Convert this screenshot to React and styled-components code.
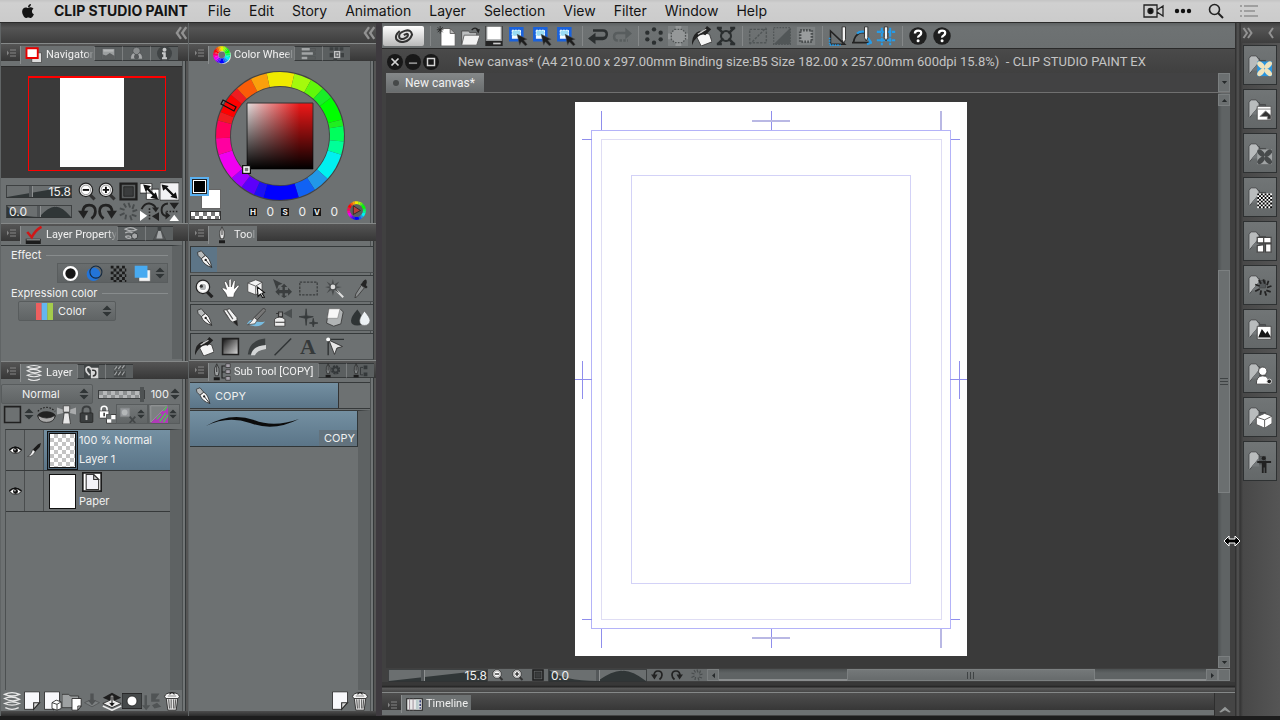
import React from 'react';
import styled, { createGlobalStyle, css } from 'styled-components';
import { FaApple } from 'react-icons/fa';

const GlobalStyle = createGlobalStyle`
    * {
        box-sizing: border-box;
    }

    body {
        margin: 0;
        background: #202020;
        color: #f0f0f0;
        font-family: Inter, "Liberation Sans", sans-serif;
        font-size: 11px;
        line-height: 16px;
        overflow: hidden;
    }

    button, input, select {
        font: inherit;
        color: inherit;
        border: 0;
        padding: 0;
        margin: 0;
        background: none;
        border-radius: 0;
    }

    svg {
        display: block;
        flex: none;
    }
`;

const checker = (size, a, b) => css`
    background: repeating-conic-gradient(${a} 0 25%, ${b} 0 50%) 0 0 / ${size}px ${size}px;
`;

/* ---------- icons ---------- */

const folder = (
    <>
        <path d="M6 5h6l1 2h6v8H6z" fill="#54585a" stroke="#46494a" strokeWidth="1" />
        <path d="M1 20V5l2-3h6l2 3h1v4L2 21z" fill="#b9bcbd" stroke="#45484a" strokeWidth="1" />
        <path d="M4 18l8-9v9z" fill="#74787a" />
    </>
);

const stack = (c) => (
    <g fill="none" stroke={c} strokeWidth="1.6">
        <path d="M3 4q9-4 18 0q-9 4-18 0zM3 9q9-4 18 1q-9 4-18-1zM3 15q9-4 18 0q-9 4-18 0z" />
        <path d="M4 20q8 4 16 0" />
    </g>
);

const nib = (
    <>
        <path d="M3 3l5-2l5 6l-5 4l-4-4z" fill="#b9bcbd" stroke="#303030" strokeWidth="1" />
        <path d="M8 11l5-4q6 3 8 15q-10-3-13-11z" fill="#f7f7f7" stroke="#202020" strokeWidth="1" />
        <path d="M21 22l-7-9" stroke="#202020" strokeWidth="1.2" />
        <circle cx="13.500" cy="12.500" r="1.500" fill="#202020" />
    </>
);

const uprightPen = (c) => (
    <>
        <path d="M12 1q-4 6-3 11l1 5h4l1-5q1-5-3-11z" fill={c} stroke="#222" strokeWidth="1" />
        <path d="M12 3v9" stroke="#222" strokeWidth="1.2" />
        <path d="M8 19h8v4H8z" fill="#1c1c1c" />
    </>
);

const trash = (
    <>
        <path d="M5 8h14l-2 15H7z" fill="#e4e4e4" stroke="#222" strokeWidth="1" />
        <path d="M8 10l1 11M11 10v11M14 10v11M16.500 10l-1 11" stroke="#555" strokeWidth="1.200" />
        <path d="M3 7q1-5 9-5t9 5l-2 2H5z" fill="#f5f5f5" stroke="#222" strokeWidth="1" />
        <path d="M9 4q3-4 6 0" fill="none" stroke="#222" strokeWidth="1.500" />
        <path d="M7 6h10" stroke="#777" />
    </>
);

const sheet = (
    <>
        <path d="M3 1h18v13l-7 8H3z" fill="#f8f8fb" stroke="#282828" strokeWidth="1" />
        <path d="M14 22v-8h7z" fill="#d8d8d8" stroke="#282828" strokeWidth="1.300" />
    </>
);

const magnifier = (sign) => (
    <>
        <path d="M14 15l7 7" stroke="#333" strokeWidth="4" />
        <circle cx="10" cy="10" r="8.500" fill="#f2f2f2" stroke="#252525" strokeWidth="1.500" />
        <circle cx="10" cy="10" r="6" fill="#fff" stroke="#888" strokeWidth="1" />
        <path d={sign === '+' ? 'M6 10h8M10 6v8' : 'M6 10h8'} stroke="#111" strokeWidth="2.400" />
    </>
);

const rotate = (flip) => (
    <g transform={flip ? 'translate(24 0) scale(-1 1)' : undefined}>
        <path d="M6 14q0-10 8-10t8 8q0 5-5 9" fill="none" stroke="#222" strokeWidth="3.400" />
        <path d="M0 11h13l-6 10z" fill="#222" />
    </g>
);

const burst = (c) => (
    <g stroke={c} strokeWidth="2.400" fill="none">
        <path d="M12 1l2 6M19 3l-2 6M23 10l-6 2M22 18l-6-2M16 23l-2-6M8 22l1-6M1 17l6-3M1 8l6 2M6 2l3 5" />
    </g>
);

const lock = (body) => (
    <>
        <path d="M7 11V7q0-5 5-5t5 5v4" fill="none" stroke={body} strokeWidth="2.500" />
        <rect x="4" y="10" width="16" height="12" rx="1" fill={body} stroke="#222" />
        <path d="M12 13v6" stroke={body === '#fff' ? '#222' : '#bbb'} strokeWidth="2.400" />
    </>
);

const selectArrow = (
    <>
        <path d="M3 3h14v14H3z" fill="#f4fbff" stroke="#1a62dc" strokeWidth="3.400" />
        <path d="M5 5h10v7H5z" fill="#9adcf4" stroke="#fff" strokeDasharray="2 1.500" />
        <path d="M11 10l12 6l-4 1l4 5l-2 2l-5-5l-2 4z" fill="#1d1d1d" stroke="#555" strokeWidth=".6" />
    </>
);

const question = (
    <>
        <circle cx="12" cy="12" r="10.500" fill="#1f1f1f" />
        <path d="M8.300 9q0-3.500 3.800-3.500t3.700 3q0 2-1.900 3t-1.800 2.500" fill="none" stroke="#fff" strokeWidth="2.800" />
        <circle cx="12.100" cy="17.600" r="1.800" fill="#fff" />
    </>
);

const flower = (bg, c) => (
    <>
        <rect x="10" y="8" width="16" height="16" fill={bg} />
        {[45, 135, 225, 315].map((a) => (
            <ellipse key={a} cx="18" cy="10.500" rx="2.800" ry="5" fill={c} transform={`rotate(${a} 18 16)`} />
        ))}
    </>
);

const ICONS = {
    menu: <path d="M4 7l4 5l-4 5zM10 5h12v2H10zM10 11h12v2H10zM10 17h12v2H10z" fill="#858585" />,
    navigator: <>
        <path d="M9 9h13v13H9z" fill="#ddd" stroke="#444" />
        <path d="M2 3h15v13H2z" fill="#fff" stroke="#e80000" strokeWidth="2.500" />
    </>,
    photo: <>
        <path d="M2 4h20v17H2z" fill="#9c9fa0" stroke="#4c4f50" />
        <path d="M2 21v-8l6 2l6-4l8 5v5z" fill="#5c5f60" />
        <path d="M4 6h16v3H4z" fill="#b6b8b9" />
    </>,
    dome: <>
        <circle cx="12" cy="8" r="6" fill="#8a8d8e" stroke="#424546" />
        <path d="M2 21q0-8 5-10l5 4l5-4q5 2 5 10z" fill="#a5a7a8" stroke="#424546" />
        <circle cx="12" cy="17" r="4" fill="#55585a" />
    </>,
    info: <>
        <circle cx="12" cy="12" r="12" fill="#404445" />
        <circle cx="12" cy="6" r="3.200" fill="#c5c7c8" />
        <path d="M8 10h6v8h2v3H8v-3h2v-5H8z" fill="#c5c7c8" />
    </>,
    bars: <>
        <path d="M1 4h22v4H1zM1 11h22v3H1zM1 17h22v4H1z" fill="#5b5f60" stroke="#505354" />
        <path d="M1 3h13v4H1zM1 10h18v4H1zM1 17h9v4H1z" fill="#a2a5a6" />
    </>,
    swatches: <>
        <path d="M1 2h6v5H1zM9 2h6v5H9zM17 2h6v5h-6zM1 11h6v7H1zM18 11h6v7h-6zM7 20h6v4H7z" fill="#3d4142" />
        <path d="M9 9h8v9H9z" fill="none" stroke="#c2c4c5" strokeWidth="2" />
        <path d="M12 12h3v3h-3z" fill="#ccc" />
    </>,
    zoomOut: magnifier('-'),
    zoomIn: magnifier('+'),
    fit: <>
        <path d="M2 2h20v20H2z" fill="#5b5e5f" stroke="#1e1e1e" strokeWidth="3" />
        <path d="M6 6h12v12H6z" fill="#3a3c3d" stroke="#222" />
    </>,
    cascade: <>
        <path d="M0 2h15v12H0zM8 9h16v13H8z" fill="#fff" stroke="#222" />
        <path d="M7 6l12 12" stroke="#111" strokeWidth="3" />
        <path d="M4 3l10 2l-7 7zM23 22l-10-2l7-7z" fill="#111" />
    </>,
    expand: <>
        <path d="M0 1h24v22H0z" fill="#f2f2f4" stroke="#222" />
        <path d="M6 6l12 12" stroke="#111" strokeWidth="3" />
        <path d="M2 3l9 2l-7 6zM22 21l-9-2l7-6z" fill="#111" />
    </>,
    rotateLeft: rotate(false),
    rotateRight: rotate(true),
    burst: burst('#484c4d'),
    flipH: <>
        <path d="M2 9q4-8 10-7t8 6" fill="none" stroke="#222" strokeWidth="2.500" />
        <path d="M15 7h9l-4 6z" fill="#222" />
        <path d="M0 11l9 6.500l-9 6.500z" fill="#fff" />
        <path d="M24 13l-9 5l9 6z" fill="#222" />
        <path d="M12 8v16" stroke="#222" strokeWidth="2" strokeDasharray="2 2" />
    </>,
    flipV: <>
        <path d="M10 2q-8 1-8 8t7 8" fill="none" stroke="#222" strokeWidth="2.500" />
        <path d="M7 12v10l6-5zM12 1h12l-6 8z" fill="#222" />
        <path d="M12 24h12l-6-8z" fill="#fff" />
        <path d="M8 12h16" stroke="#222" strokeWidth="2" strokeDasharray="2 2" />
    </>,
    propertyCheck: <>
        <path d="M1 17h20v7H1z" fill="#1c1c1c" />
        <path d="M2 18h18v1H2z" fill="#ddd" />
        <path d="M3 8l6 7q5-10 13-14" fill="none" stroke="#d01818" strokeWidth="3.400" />
    </>,
    layersSearch: <>
        <path d="M2 5q9-5 18 1q-9 4-18-1zM2 11q7-4 13 1M2 17q6-3 10 1q-5 4-10-1" fill="none" stroke="#b0b2b3" strokeWidth="2" />
        <circle cx="17" cy="16" r="5" fill="#a5a7a8" stroke="#3b3e3f" strokeWidth="1.500" />
    </>,
    lantern: <>
        <path d="M9 1h6v6H9z" fill="#3d4041" />
        <path d="M9 8h6l7 14H2z" fill="#55585a" stroke="#404344" />
        <path d="M10 8h4l3 12H7z" fill="#a7aaab" />
    </>,
    borderCircle: <circle cx="12" cy="12" r="9" fill="#161616" stroke="#fff" strokeWidth="3.400" />,
    blueCircle: <>
        <circle cx="10.500" cy="13" r="9.500" fill="#2374d8" />
        <circle cx="14" cy="10" r="8.500" fill="none" stroke="#15293f" strokeWidth="1.500" />
    </>,
    tone: <path d="M1 3h22M5 7h18M1 11h22M5 15h18M1 19h22M5 23h18" stroke="#1c1c1c" strokeWidth="4" strokeDasharray="4 4" />,
    blueLayer: <>
        <path d="M7 7h16v16H7z" fill="#f3f3f3" stroke="#444" strokeWidth=".6" />
        <path d="M1 1h18v17H1z" fill="#48aaf0" />
    </>,
    updown: <path d="M3 10l9-9l9 9zM3 14l9 9l9-9z" fill="#303536" />,
    colorBars: <>
        <path d="M0 0h8v24H0z" fill="#ed5f5f" />
        <path d="M8 0h8v24H8z" fill="#64b6f0" />
        <path d="M16 0h8v24h-8z" fill="#a4cc4c" />
    </>,
    stack: stack('#e8e8e8'),
    history: <>
        <path d="M0 0h24v24H0z" fill="#3f4344" />
        <path d="M11 6h12v17H11z" fill="#d8d8d8" />
        <path d="M11 9q-1-5-5-4t-2 7l5 6" fill="none" stroke="#d8d8d8" strokeWidth="3" />
        <path d="M13 10q6-1 6 4t-5 5" fill="none" stroke="#333" strokeWidth="2.400" />
    </>,
    clap: <>
        <path d="M3 5l19-3v5L3 10zM3 11h19v10H3z" fill="#46494a" />
        <path d="M4 9l4-5M10 8l4-5M16 7l4-5M4 18l4-6M10 18l4-6M16 18l4-6" stroke="#a0a3a4" strokeWidth="2" />
    </>,
    square: <path d="M2 2h20v20H2z" fill="none" stroke="#202020" strokeWidth="2" />,
    mask: <>
        <ellipse cx="12" cy="14" rx="11.500" ry="6" fill="#222" />
        <path d="M1 13q11 7 22 0q-1 9-11 9T1 13z" fill="#aaa" stroke="#222" />
        <path d="M1 8q11-10 22 0" fill="none" stroke="#222" strokeWidth="1.500" strokeDasharray="2 2" />
    </>,
    lighthouse: <>
        <path d="M0 3l8 3v4l-8 2zM24 3l-8 3v4l8 2z" fill="#a9abac" />
        <path d="M8 1h8v8H8z" fill="#ddd" stroke="#444" />
        <path d="M9 10h6l2 14H7z" fill="#e8e8e8" stroke="#333" />
    </>,
    lock: lock('#3b3e3f'),
    lockAlpha: <>
        <g transform="scale(.75)">{lock('#fff')}</g>
        <path d="M12 12h12v11H12z" fill="#fff" stroke="#222" />
        <path d="M12 12h6v6h-6zM18 18h6v5h-6z" fill="#6b6f70" />
    </>,
    maskDim: <>
        <path d="M2 3h13v12H2z" fill="#94979a" stroke="#858889" />
        <circle cx="8" cy="9" r="4" fill="#b4b7b8" />
        <path d="M15 15l8 9M23 15l-8 9" stroke="#434748" strokeWidth="2.500" />
    </>,
    rulerDim: <>
        <path d="M1 1h22L1 23z" fill="#7c8081" stroke="#a0a3a4" />
        <path d="M24 0v24H1z" fill="#b03ab8" />
        <path d="M9 19l6-7M13 22l8-11M18 23l6-10M18 8l5-6" stroke="#4fbf56" strokeWidth="2" />
    </>,
    eye: <>
        <path d="M1 12q10-13 22 0q-11 11-22 0z" fill="#fff" stroke="#111" strokeWidth="1.500" />
        <path d="M1 11q10-10 22 0" fill="none" stroke="#111" strokeWidth="3" />
        <circle cx="12" cy="12" r="4.500" fill="#111" />
        <circle cx="11" cy="10.500" r="1.300" fill="#fff" />
    </>,
    brushEdit: <>
        <path d="M24 0l-5 2l-9 9l4 4l8-8z" fill="#1a1a1a" />
        <path d="M10 11l4 4q-4 8-13 9q6-4 9-13z" fill="#f0f0f0" stroke="#222" />
    </>,
    paperIcon: <>
        <path d="M1 1h22v22H1z" fill="#fff" stroke="#1c1c1c" strokeWidth="2" />
        <path d="M5 3h9l6 6v12H5z" fill="#f3f3f8" stroke="#333" strokeWidth="1.300" />
        <path d="M14 3v6h6z" fill="#ccc" stroke="#333" strokeWidth="1.300" />
    </>,
    newSheet: sheet,
    newVector: <>
        {sheet}
        <path d="M12 14l5-3l6 2v8l-5 2l-6-2zM12 14l6 2v7M18 16l5-3" fill="#fff" stroke="#222" />
    </>,
    newFolder: <>
        <path d="M0 4h8l2 2h10v14H0z" fill="#9ea1a2" stroke="#333" />
        <path d="M12 9h11v9l-4 5h-7z" fill="#fff" stroke="#222" />
        <path d="M19 23v-5h4z" fill="#ccc" stroke="#222" />
    </>,
    mergeDim: <>
        <path d="M3 14l9-4l9 4l-9 5z" fill="#7c8081" stroke="#505354" />
        <path d="M10 3h4v8h3l-5 6l-5-6h3z" fill="#505354" />
    </>,
    merge: <>
        <path d="M1 8l11-6l11 6l-11 5z" fill="#1e1e1e" />
        <path d="M1 15l11-5l11 5l-11 5z" fill="#eee" stroke="#222" />
        <path d="M1 18l11 5l11-5" fill="none" stroke="#eee" strokeWidth="1.800" />
        <path d="M11 6h2v8h3l-4 5l-4-5h3z" fill="#111" stroke="#fff" strokeWidth=".7" />
    </>,
    maskOn: <>
        <path d="M0 3h24v18H0z" fill="#45494a" stroke="#1e1e1e" />
        <circle cx="12" cy="12" r="6" fill="#fff" stroke="#222" />
    </>,
    applyDim: <path d="M3 5h3v12h4l-5 6l-5-6h3zM11 3h10l-5 7h5v3H11zM12 17l6-3l5 5l-8 2z" fill="#505455" />,
    trash,
    penUp: uprightPen('#e6e6e6'),
    subTools: <>
        <g transform="translate(-7 0)">{uprightPen('#9fa2a3')}</g>
        <path d="M16 4h-4v16h4M12 12h4" fill="none" stroke="#222" strokeWidth="1.500" />
        <path d="M17 1h6v5h-6zM17 9h6v5h-6zM17 18h6v5h-6z" fill="#a7a2ab" stroke="#333" />
    </>,
    penGear: <>
        <g transform="translate(-7 0)">{uprightPen('#7d8182')}</g>
        <circle cx="17" cy="11" r="5.500" fill="none" stroke="#34383a" strokeWidth="4" strokeDasharray="3 1.300" />
        <circle cx="17" cy="11" r="4" fill="none" stroke="#34383a" strokeWidth="2.500" />
    </>,
    penList: <>
        <g transform="translate(-7 0)">{uprightPen('#7d8182')}</g>
        <path d="M16 7h-4v12h4" fill="none" stroke="#34383a" strokeWidth="1.500" />
        <path d="M17 4h6v6h-6zM17 15h6v6h-6z" fill="#34383a" />
    </>,
    nib,
    magnify: <>
        <path d="M15 16l7 7" stroke="#222" strokeWidth="4" />
        <circle cx="10" cy="10" r="8.500" fill="#ededed" stroke="#222" strokeWidth="1.500" />
        <circle cx="10" cy="10" r="5" fill="#b4b7b8" stroke="#fff" strokeWidth="2" />
        <circle cx="8" cy="9" r="2" fill="#333" />
    </>,
    hand: <path d="M8 23q-1-5-7-11q2-2 6 1L4 4q2-2 3 0l3 6V1q2-2 3 0v9l3-8q2-1 2 1l-1 9l4-4q3-1 2 1l-6 9l-1 5z" fill="#fff" stroke="#333" strokeWidth=".8" />,
    cube: <>
        <path d="M1 5l10-4l8 3v11l-8 5l-10-4zM1 5l10 4v11M11 9l8-5" fill="#f2f2f2" stroke="#444" />
        <path d="M13 10l9 7l-3 1l3 5l-2 1l-3-5l-3 3z" fill="#fff" stroke="#111" strokeWidth="1.400" />
    </>,
    move: <>
        <path d="M0 0l12 6l-5 2l-2 6z" fill="#3b3e3f" />
        <path d="M14 6l4 4h-3v4h4v-3l5 5l-5 5v-3h-4v3h3l-4 3l-4-3h2v-3H8v3l-5-5l5-5v3h4v-4H10z" fill="#3b3e3f" />
    </>,
    marquee: <path d="M1 4h22v16H1z" fill="none" stroke="#3b3e3f" strokeWidth="1.600" strokeDasharray="3 1.500" />,
    wand: <>
        <path d="M11 11l12 12" stroke="#e0e0e0" strokeWidth="2.500" />
        <path d="M10 0l1.500 7L18 3l-4 6l7 1l-7 2l4 6l-6-4l-2 7l-2-7l-6 4l4-6l-6-2l6-1l-4-6l6 4z" fill="#4a4d4e" />
        <circle cx="10" cy="10" r="3" fill="#ddd" />
    </>,
    dropper: <>
        <path d="M13 8l4 3l-9 11l-3 2l1-5z" fill="#8c8f90" stroke="#333" />
        <path d="M15 3q5-5 5 1l-1 4l2 2l-2 2l-7-5l2-2z" fill="#242424" />
    </>,
    pencil: <>
        <path d="M3 3l8-2l9 11l1 10l-9-6z" fill="#f2f2f2" stroke="#333" />
        <path d="M3 3l6 9M7 2l8 12" stroke="#555" strokeWidth="1.500" />
        <path d="M21 23l-6-6l5-2z" fill="#222" />
    </>,
    brush: <>
        <path d="M0 20q4-7 8-4q7 3 15 1q-6 7-13 6t-10-3z" fill="#78bce0" />
        <path d="M21 0l3 3L13 15l-4-3z" fill="#777" stroke="#333" />
        <path d="M9 12l4 3l-3 5l-9 1q5-3 8-9z" fill="#f2f2f2" stroke="#444" />
    </>,
    airbrush: <>
        <path d="M13 7l11-6v12z" fill="#4b4f50" />
        <path d="M2 14q6-5 13 0v9H2z" fill="#eee" stroke="#333" />
        <path d="M7 5h5v6H7zM4 7h4M3 18h12" fill="#999" stroke="#333" strokeWidth="1.400" />
    </>,
    sparkle: <path d="M9 1l1 9l8 1l-8 2l-1 9l-1-9l-8-2l8-1zM18 13l1 5l5 1l-5 1l-1 4l-1-4l-4-1l4-1z" fill="#363a3b" stroke="#363a3b" />,
    eraser: <>
        <path d="M5 1h14l4 4l-3 15l-9 3l-9-4z" fill="#b1b4b5" stroke="#333" />
        <path d="M5 1h14l-3 12H3z" fill="#f7f7f7" stroke="#777" strokeWidth=".7" />
    </>,
    drops: <>
        <path d="M8 2q-8 9-8 14q0 6 8 6t7-6q0-5-7-14z" fill="#2f3435" />
        <path d="M17 4q-6 8-6 12q0 6 6 6t7-6q0-4-7-12z" fill="#edf2f5" stroke="#666" strokeWidth=".7" />
    </>,
    bucket: <>
        <path d="M10 6l11 4l3 9l-13 5l-5-10z" fill="#f5f5f5" stroke="#333" />
        <path d="M11 9l7-9l5 4l-7 7M0 19q1-10 9-13l5 4q-9 1-14 13z" fill="#222" />
        <path d="M7 10l10-6" stroke="#ccc" strokeWidth="1.500" />
    </>,
    gradient: <path d="M2 2h20v20H2z" fill="url(#gradTool)" stroke="#202020" strokeWidth="2" />,
    curve: <>
        <path d="M1 22Q3 4 23 2v9Q12 13 9 22z" fill="#3c4041" />
        <path d="M5 23q2-12 19-13v5Q12 17 10 23z" fill="#d4d6d7" />
    </>,
    line: <path d="M2 23L23 2" stroke="#303435" strokeWidth="1.800" />,
    rulerPen: <>
        <path d="M3 3h21M4 3v20" stroke="#303435" strokeWidth="1.800" />
        <path d="M5 4l17 8l-7 2l-3 8z" fill="#e8e8e8" stroke="#222" />
        <circle cx="4" cy="3" r="2.500" fill="#fff" />
    </>,
    newDoc: <>
        <path d="M6 3h11l6 6v15H6z" fill="#fff" stroke="#555" />
        <path d="M17 3v6h6z" fill="#bbb" stroke="#555" />
        <path d="M5 0v9M1 4.500h8M2 1.500l6 6M8 1.500l-6 6" stroke="#222" strokeWidth="1" />
    </>,
    open: <>
        <path d="M2 6h8l2 2h8v13H2z" fill="#bdbfc0" stroke="#444" />
        <path d="M5 11h19l-4 12H2z" fill="#f2f2f2" stroke="#555" />
        <path d="M14 5q4-5 8 0" fill="none" stroke="#222" strokeWidth="1.500" />
        <path d="M19 4h5l-2 5z" fill="#222" />
    </>,
    save: <>
        <path d="M2 0h20v24H2z" fill="#9c9fa0" stroke="#333" />
        <path d="M4 1h16v15H4z" fill="#fff" />
        <path d="M2 18h20v6H2z" fill="#242424" />
        <path d="M11 20h9v2h-9z" fill="#ccc" />
    </>,
    selectArrow,
    undo: <path d="M0 15l9-7v5h9q3 0 3-3t-3-3H6V4h12q6 0 6 6t-6 7H9v5z" fill="#2b2f30" />,
    redo: <>
        <path d="M24 9l-8-7v5H7q-6 0-6 6t6 6v-3q-3 0-3-3t3-3h9v6z" fill="#585d5e" />
        <path d="M9 17.500h10" stroke="#585d5e" strokeWidth="3" strokeDasharray="3 1.500" />
    </>,
    spinner: <g fill="#2b2f30">
        <circle cx="12" cy="4" r="2.600" /><circle cx="20" cy="8" r="2.600" /><circle cx="20" cy="16" r="2.600" />
        <circle cx="12" cy="20" r="2.600" /><circle cx="4" cy="16" r="2.600" /><circle cx="4" cy="8" r="2.600" />
    </g>,
    glow: <>
        <path d="M0 0h24v24H0z" fill="#7b7f80" />
        <path d="M9 0h7v24H9zM0 9h24v7H0z" fill="#949798" />
        <path d="M8 4h9l4 4v8l-4 4H8l-4-4V8z" fill="#959899" stroke="#505455" strokeWidth="1.600" strokeDasharray="2 1.500" />
    </>,
    transform: <>
        <circle cx="12" cy="12" r="6" fill="none" stroke="#2b2f30" strokeWidth="2.500" />
        <path d="M2 2l7 7M22 2l-7 7M2 22l7-7M22 22l-7-7" stroke="#2b2f30" strokeWidth="3" />
        <path d="M1 1h6v3H1zM17 1h6v3h-6zM1 20h6v3H1zM17 20h6v3h-6z" fill="#2b2f30" />
    </>,
    noSelect: <path d="M2 4h20v16H2zM2 22L22 2" fill="none" stroke="#515657" strokeWidth="1.700" strokeDasharray="3 1.500" />,
    invert: <>
        <path d="M2 2h20v20H2z" fill="none" stroke="#515657" strokeWidth="1.500" strokeDasharray="2 1.500" />
        <path d="M22 2v20H2z" fill="#515657" />
    </>,
    border: <>
        <path d="M1 1h22v22H1z" fill="#7d8182" />
        <path d="M5 5h14v14H5z" fill="#9a9d9e" stroke="#4a4e4f" strokeWidth="3" strokeDasharray="2 1.500" />
    </>,
    snapRuler: <>
        <path d="M3 6v16h17z" fill="none" stroke="#222" strokeWidth="1.800" />
        <path d="M2 14v9h13" fill="none" stroke="#269be8" strokeWidth="2" strokeDasharray="2 1" />
        <path d="M17 1h4v15l-2 5l-2-5z" fill="#f3f3f3" stroke="#222" />
    </>,
    snapSpecial: <>
        <path d="M2 19q1-8 8-11h5M0 20h20" fill="none" stroke="#222" strokeWidth="2" />
        <path d="M6 9q3-3 9-2M19 14l4 6l-5 2" fill="none" stroke="#269be8" strokeWidth="2.500" />
        <path d="M15 1h4v13l-2 4l-2-4z" fill="#f3f3f3" stroke="#222" />
    </>,
    snapGrid: <>
        <path d="M7 2v21M17 2v21M1 7h22M1 17h22" stroke="#269be8" strokeWidth="2.500" strokeDasharray="5 1" />
        <path d="M10 1h4v13l-2 4l-2-4z" fill="#f3f3f3" stroke="#222" />
    </>,
    question,
    filmStrip: <>
        <path d="M1 4h22v16H1z" fill="#e9e9e9" stroke="#222" strokeWidth="1.500" />
        <path d="M5 4v16M10 4v16" stroke="#a3969e" strokeWidth="1.500" />
        <path d="M14 5h4v14h-4z" fill="#bcc" />
        <path d="M19 6h2v3h-2zM19 11h2v3h-2zM19 16h2v2h-2z" fill="#26316c" />
    </>,
    folderBlue: <>{folder}{flower('#2a95de', '#efe3bd')}</>,
    folderScene: <>{folder}<path d="M10 9h15v15H10z" fill="#fff" stroke="#555" /><path d="M10 12h15M13 20l6-6l6 5v4h-4v-3h-4z" fill="#333" stroke="#888" /></>,
    folderGray: <>{folder}{flower('#a0a3a4', '#474a4b')}</>,
    folderTone: <>{folder}<path d="M10 8h16v16H10z" fill="#fff" /><path d="M10 9h16M12 11h14M10 13h16M12 15h14M10 17h16M12 19h14M10 21h16M12 23h14" stroke="#000" strokeWidth="2" strokeDasharray="2 2" /></>,
    folderComic: <>{folder}<path d="M10 8h7v6h-7zM17 8h8v6h-8zM10 17l7-1v8h-7zM19 15h6v9h-6z" fill="#fff" stroke="#444" strokeWidth="1.300" /></>,
    folderBurst: <>{folder}<g transform="translate(7 5) scale(.8)">{burst('#222')}</g></>,
    folderImage: <>{folder}<path d="M10 9h15v14H10z" fill="#fff" stroke="#444" /><path d="M11 21l4-9l4 5l2-3l4 7z" fill="#161616" /></>,
    folderPose: <>{folder}<circle cx="16" cy="10" r="4.500" fill="#fff" stroke="#444" /><path d="M9 24q0-9 7-9t7 9z" fill="#fff" stroke="#444" /><circle cx="23" cy="21" r="2.500" fill="#222" stroke="#ddd" /></>,
    folderCube: <>{folder}<path d="M9 12l9-4l8 3v8l-8 5l-9-4zM9 12l9 3v9M18 15l8-4" fill="#fff" stroke="#555" /></>,
    folderBody: <>{folder}<circle cx="17" cy="9" r="2.200" fill="#222" /><path d="M10 12h15v2h-5v11h-2v-6h-1v6h-2V14h-5z" fill="#222" /></>,
    close: <path d="M6 6l12 12M18 6L6 18" stroke="#d5d5d5" strokeWidth="3" />,
    minimize: <path d="M5 14h14" stroke="#8d8d8d" strokeWidth="3" />,
    maximize: <path d="M6 6h12v12H6z" fill="none" stroke="#d5d5d5" strokeWidth="2.500" />,
    chevronsLeft: <path d="M12 2L5 12l7 10M21 2l-7 10l7 10" fill="none" stroke="#929292" strokeWidth="4" />,
    chevronsRight: <path d="M3 2l7 10l-7 10M12 2l7 10l-7 10" fill="none" stroke="#929292" strokeWidth="4" />,
    chevronLeft: <path d="M16 2L9 12l7 10" fill="none" stroke="#929292" strokeWidth="4" />,
    up: <path d="M5 16l7-8l7 8z" fill="#262a2b" />,
    down: <path d="M5 8l7 8l7-8z" fill="#262a2b" />,
    left: <path d="M16 5l-8 7l8 7z" fill="#262a2b" />,
    right: <path d="M8 5l8 7l-8 7z" fill="#262a2b" />,
    drawerUp: <path d="M2 17L12 8l10 9l-3 1l-7-4l-7 4z" fill="#949797" />,
};

function Icon({ name, size = 16 }) {
    return (
        <svg width={size} height={size} viewBox="0 0 24 24" aria-hidden="true">
            {ICONS[name]}
        </svg>
    );
}

/* ---------- page frame ---------- */

const Page = styled.div`
    height: 100vh;
    min-height: 640px;
    display: flex;
    flex-direction: column;
`;

const MenuBar = styled.nav`
    height: 23px;
    flex: none;
    display: flex;
    align-items: center;
    gap: 18px;
    padding: 0 22px 0 20px;
    background: linear-gradient(#c4c4c4, #d0d0d0 3px, #cbcbcb);
    border-bottom: 1px solid #2b2b2b;
    color: #141414;
    font-size: 14px;
    line-height: 20px;
`;

const MenuItem = styled.button`
    white-space: nowrap;
`;

const AppName = styled(MenuItem)`
    font-weight: 700;
    padding-right: 2px;
`;

const MenuExtras = styled.div`
    margin-left: auto;
    display: flex;
    align-items: center;
    gap: ${(p) => p.$gap}px;
`;

const Workspace = styled.div`
    flex: 1;
    min-height: 0;
    display: flex;
    background: #3e3a3f;
`;

const Footer = styled.div`
    height: 4px;
    flex: none;
    background: #1d1d1d;
`;

const Dock = styled.aside`
    width: 188px;
    flex: none;
    display: flex;
    flex-direction: column;
    border-left: 1px solid #606465;
    background: #6d7172;
`;

const DockHeader = styled.div`
    height: 20px;
    flex: none;
    display: flex;
    align-items: center;
    justify-content: flex-end;
    background: linear-gradient(#414141, #545454 5px, #3e3e3e);
`;

const DockBase = styled.div`
    height: 5px;
    flex: none;
    background: linear-gradient(#4d4d4d, #2c2c2c);
`;

const Panel = styled.section`
    display: flex;
    flex-direction: column;
    min-height: 0;
    ${(p) => (p.$height ? `height: ${p.$height}px; flex: none;` : 'flex: 1;')}
`;

const TabBar = styled.div`
    height: 18px;
    flex: none;
    display: flex;
    border-top: 1px solid #858888;
    background: linear-gradient(#555, #373737);
`;

const PanelMenu = styled.button`
    width: 19px;
    padding-left: 4px;
    flex: none;
`;

const Tab = styled.button`
    width: ${(p) => p.$width}px;
    height: 18px;
    margin-top: 2px;
    padding-left: 4px;
    flex: none;
    display: flex;
    align-items: center;
    gap: 3px;
    background: #6d7172;
    border-left: 1px solid #8b8e8f;
    overflow: hidden;
    white-space: nowrap;
    font-family: Roboto, sans-serif;
    font-size: 11px;
    z-index: 1;
`;

const TabText = styled.span`
    flex: 1;
    overflow: hidden;
    text-align: left;
    mask-image: linear-gradient(to left, ${(p) => (p.$fade ? 'transparent, #000 9px' : '#000, #000')});
`;

const MiniTab = styled.button`
    width: 28px;
    margin-top: 2px;
    flex: none;
    display: flex;
    justify-content: center;
    align-items: center;
    background: #5b5f60;
    border: 1px solid #36393a;
    border-left-color: #7c7f80;
    border-right-width: 0;
`;

const PanelBody = styled.div`
    flex: 1;
    min-height: 0;
    display: flex;
    flex-direction: column;
    padding: ${(p) => p.$top || 5}px 6px 0 0;
    background:
        linear-gradient(to right, #4c5051 1px, #717576 1px, #717576 3px, #343839 3px, #343839 4px, #555 4px) right / 6px 100% no-repeat,
        #6d7172;
`;

const IconButton = styled.button`
    width: ${(p) => p.$w || 20}px;
    height: 20px;
    flex: none;
    display: flex;
    align-items: center;
    justify-content: center;
    ${(p) => p.$boxed && 'background: linear-gradient(#747879, #616566); border: 1px solid #585c5d;'}
`;

const Row = styled.div`
    display: flex;
    align-items: center;
    gap: ${(p) => p.$gap || 0}px;
    height: ${(p) => p.$height || 20}px;
    flex: none;
    padding-left: ${(p) => p.$left || 0}px;
`;

/* ---------- value slider ---------- */

const SliderBox = styled.label`
    display: grid;
    width: ${(p) => p.$width}px;
    height: 13px;
    margin-right: ${(p) => p.$after || 0}px;
    flex: none;
    border: 1px solid #3e4142;
    border-bottom-color: #303334;
    overflow: hidden;
    background: #6b6f70;

    & > * {
        grid-area: 1 / 1;
        width: 100%;
        height: 11px;
    }
`;

const Range = styled.input`
    appearance: none;
    background: none;

    &::-webkit-slider-thumb {
        appearance: none;
        width: 4px;
        height: 15px;
        background: #54585a;
        border-right: 1px solid #8d9091;
    }
`;

const Reading = styled.output`
    padding-left: ${(p) => (p.$align === 'left' ? 2 : 0)}px;
    font-size: 12px;
    line-height: 11px;
    text-align: ${(p) => p.$align};
    pointer-events: none;
`;

function ValueSlider({ width, shape, value, label, percent, align, after }) {
    return (
        <SliderBox $width={width} $after={after}>
            <svg viewBox="0 0 66 12" preserveAspectRatio="none">
                <path d={shape === 'ramp' ? 'M0 12L66 0v12z' : 'M0 0Q10 12 33 12Q44 0 50 1Q56 0 66 12H0z'} fill="#303637" />
            </svg>
            <Range type="range" aria-label={label} defaultValue={percent} />
            <Reading $align={align}>{value}</Reading>
        </SliderBox>
    );
}

/* ---------- navigator ---------- */

const NavView = styled.div`
    flex: 1;
    display: flex;
    justify-content: center;
    padding: 9px 16px 7px 27px;
    background: #3a3a3a;
    border-top: 1px solid #2b2b2b;
`;

const NavFrame = styled.div`
    flex: 1;
    display: flex;
    justify-content: center;
    padding: 0 11px 3px 0;
    border: 1px solid #f00;
    border-top-width: 2px;
`;

const NavPage = styled.div`
    width: 64px;
    background: #fff;
`;

const NavControls = styled.div`
    padding: 3px 0 2px 5px;
`;

function DockPanel({ height, tab, icon, width, fade, minis, children, top }) {
    return (
        <Panel $height={height}>
            <TabBar>
                <PanelMenu aria-label={`${tab} menu`}><Icon name="menu" size={12} /></PanelMenu>
                <Tab $width={width}>
                    <Icon name={icon} size={18} />
                    <TabText $fade={fade}>{tab}</TabText>
                </Tab>
                {minis.map((m) => <MiniTab key={m} aria-label={m}><Icon name={m} size={15} /></MiniTab>)}
            </TabBar>
            <PanelBody $top={top}>{children}</PanelBody>
        </Panel>
    );
}

function Navigator() {
    return (
        <DockPanel height={180} tab="Navigator" icon="navigator" width={74} fade minis={['photo', 'dome', 'info']}>
            <NavView><NavFrame><NavPage /></NavFrame></NavView>
            <NavControls>
                <Row>
                    <ValueSlider width={66} after={5} shape="ramp" value="15.8" label="Zoom" percent={36} align="right" />
                    {['zoomOut', 'zoomIn', 'fit', 'cascade', 'expand'].map((n) => (
                        <IconButton key={n} aria-label={n} $w={n === 'fit' ? 22 : 20}><Icon name={n} size={19} /></IconButton>
                    ))}
                </Row>
                <Row>
                    <ValueSlider width={66} after={5} shape="bump" value="0.0" label="Rotation" percent={50} align="left" />
                    {['rotateLeft', 'rotateRight', 'burst', 'flipH', 'flipV'].map((n) => (
                        <IconButton key={n} aria-label={n} $w={n === 'burst' ? 22 : 20}><Icon name={n} size={19} /></IconButton>
                    ))}
                </Row>
            </NavControls>
        </DockPanel>
    );
}

/* ---------- layer property ---------- */

const PropertyBox = styled.div`
    flex: 1;
    margin-bottom: 2px;
    border-top: 1px solid #363a3b;
    border-right: 10px solid #5f6364;
    padding: 1px 4px 0 5px;
`;

const Legend = styled.div`
    height: 16px;
    display: flex;
    align-items: center;
    gap: 5px;
    padding-left: 5px;
    white-space: nowrap;

    &::after {
        content: '';
        flex: 1;
        height: 1px;
        background: #888c8d;
    }
`;

const EffectGroup = styled.div`
    width: 111px;
    height: 20px;
    margin: 0 0 2px auto;
    display: flex;
    align-items: center;
    background: linear-gradient(#696d6e, #5d6162);
    border: 1px solid #595d5e;
`;

const SelectBox = styled.label`
    width: ${(p) => p.$width}px;
    height: 20px;
    display: flex;
    align-items: center;
    flex: none;
    gap: 5px;
    padding: 0 2px 0 ${(p) => p.$left}px;
    margin-left: ${(p) => p.$offset || 0}px;
    background: linear-gradient(#727677, #606465);
    border: 1px solid #585c5d;
    border-radius: 2px;
`;

const Select = styled.select`
    appearance: none;
    flex: 1;
    min-width: 0;
    outline: none;
`;

function LayerProperty() {
    return (
        <DockPanel height={138} tab="Layer Property" icon="propertyCheck" width={97} top={4} fade minis={['layersSearch', 'lantern']}>
            <PropertyBox>
                <Legend>Effect</Legend>
                <EffectGroup>
                    {['borderCircle', 'blueCircle', 'tone', 'blueLayer'].map((n) => (
                        <IconButton key={n} $w={24} aria-label={n}><Icon name={n} size={17} /></IconButton>
                    ))}
                    <Icon name="updown" size={12} />
                </EffectGroup>
                <Legend>Expression color</Legend>
                <SelectBox $width={98} $left={17} $offset={12}>
                    <Icon name="colorBars" size={17} />
                    <Select aria-label="Expression color"><option>Color</option><option>Gray</option></Select>
                    <Icon name="updown" size={12} />
                </SelectBox>
            </PropertyBox>
        </DockPanel>
    );
}

/* ---------- layers ---------- */

const OpacityRange = styled.input`
    appearance: none;
    width: 47px;
    height: 9px;
    margin-left: 5px;
    border: 1px solid #3c3f40;
    ${checker(8, '#b7b9ba', '#8d9091')}

    &::-webkit-slider-thumb {
        appearance: none;
        width: 4px;
        height: 15px;
        background: #4e5253;
    }
`;

const NumberField = styled.input`
    width: ${(p) => p.$width}px;
    text-align: right;
`;

const LayerList = styled.div`
    flex: 1;
    min-height: 0;
    margin-left: 4px;
    border-left: 1px solid #4c5051;
    border-top: 1px solid #36393a;
    border-right: 12px solid #5e6263;
`;

const LayerRow = styled.div`
    height: 41px;
    display: grid;
    grid-template-columns: 19px 19px 1fr;
    border-bottom: 1px solid #36393a;
`;

const LayerCell = styled.div`
    display: flex;
    align-items: center;
    justify-content: center;
    border-right: 1px solid #4a4d4e;
`;

const LayerMain = styled.div`
    display: flex;
    align-items: center;
    gap: 3px;
    padding-left: 5px;
    font-size: 11px;
    line-height: 19px;
    ${(p) => p.$active && 'background: linear-gradient(#7490a2, #5b7588);'}
`;

const Thumb = styled.div`
    width: 27px;
    height: 35px;
    border: 1px solid #111;
    background: #fff;
    ${(p) => p.$clear && checker(8, '#c4c4c4', '#fff')}
    ${(p) => p.$clear && 'outline: 1px solid #4e6577; box-shadow: 0 0 0 2px #111;'}
`;

const LayerNames = styled.div`
    display: flex;
    flex-direction: column;
    white-space: nowrap;
`;

const PanelFooter = styled.div`
    height: 21px;
    flex: none;
    display: flex;
    align-items: center;
    padding-left: 1px;
    justify-content: ${(p) => (p.$end ? 'flex-end' : 'flex-start')};
`;

function Layers() {
    return (
        <DockPanel tab="Layer" icon="stack" width={57} minis={['history', 'clap']}>
            <Row>
                <SelectBox $width={92} $left={20}>
                    <Select aria-label="Blending mode"><option>Normal</option><option>Multiply</option></Select>
                    <Icon name="updown" size={12} />
                </SelectBox>
                <OpacityRange type="range" aria-label="Layer opacity" defaultValue={100} />
                <NumberField $width={24} aria-label="Opacity value" defaultValue="100" />
                <Icon name="updown" size={12} />
            </Row>
            <Row $left={2}>
                <Icon name="square" size={19} />
                <IconButton $w={14} aria-label="Palette color"><Icon name="updown" size={12} /></IconButton>
                {['mask', 'lighthouse', 'lock', 'lockAlpha'].map((n) => (
                    <IconButton key={n} aria-label={n}><Icon name={n} size={19} /></IconButton>
                ))}
                <IconButton $w={32} $boxed aria-label="Enable mask"><Icon name="maskDim" size={17} /><Icon name="updown" size={10} /></IconButton>
                <IconButton $w={32} $boxed aria-label="Show ruler"><Icon name="rulerDim" size={18} /><Icon name="updown" size={10} /></IconButton>
            </Row>
            <Row $height={5} />
            <LayerList>
                <LayerRow>
                    <LayerCell><Icon name="eye" size={13} /></LayerCell>
                    <LayerCell><Icon name="brushEdit" size={14} /></LayerCell>
                    <LayerMain $active>
                        <Thumb $clear />
                        <LayerNames><span>100 % Normal</span><span>Layer 1</span></LayerNames>
                    </LayerMain>
                </LayerRow>
                <LayerRow>
                    <LayerCell><Icon name="eye" size={13} /></LayerCell>
                    <LayerCell />
                    <LayerMain>
                        <Thumb />
                        <LayerNames>
                            <Row $left={3}><Icon name="paperIcon" size={20} /></Row>
                            <span>Paper</span>
                        </LayerNames>
                    </LayerMain>
                </LayerRow>
            </LayerList>
            <PanelFooter>
                {['stack', 'newSheet', 'newVector', 'newFolder', 'mergeDim', 'merge', 'maskOn', 'applyDim', 'trash'].map((n) => (
                    <IconButton key={n} aria-label={n}><Icon name={n} size={20} /></IconButton>
                ))}
            </PanelFooter>
        </DockPanel>
    );
}

/* ---------- colour wheel ---------- */

// clockwise from the top, each entry is [end angle, colour]
const HUES = [
    [13, '#f0ea00'], [29, '#a4fa0c'], [42, '#60f80a'], [53, '#18ee28'], [75, '#00ff00'], [81, '#20ee20'],
    [95, '#00ff5c'], [107, '#00ff98'], [132, '#00f0f0'], [147, '#2298e8'], [163, '#1062f4'], [195, '#0000ff'],
    [204, '#1c10f4'], [217, '#5c00fa'], [229, '#a000ff'], [253, '#f000f0'], [268, '#ff00a0'], [284, '#ff005c'],
    [292, '#ee1c20'], [310, '#ff0000'], [318, '#ee1c20'], [333, '#fa5c08'], [348, '#faa00c'],
];

const point = (angle, r) => {
    const a = (angle * Math.PI) / 180;
    return `${65 + Math.sin(a) * r} ${65 - Math.cos(a) * r}`;
};

const arc = (from, to, inner) => `M${point(from, 64)}A64 64 0 0 1 ${point(to, 64)}L${point(to, inner)}A${inner} ${inner} 0 0 0 ${point(from, inner)}z`;

function HueRing({ inner = 50 }) {
    return HUES.map(([end, color], i) => (
        <path key={end} d={arc(i ? HUES[i - 1][0] : -12, end, inner)} fill={color} />
    ));
}

ICONS.wheel = (
    <>
        <circle cx="13" cy="13" r="11" fill="#e8e8e8" />
        <g transform="scale(.18)"><HueRing inner={26} /></g>
        <circle cx="11.700" cy="11.700" r="4.500" fill="#6d7172" />
    </>
);

ICONS.colorSpace = (
    <>
        <g transform="scale(.185)"><HueRing inner={42} /></g>
        <circle cx="12" cy="12" r="8" fill="#5b5f60" />
        <path d="M8 6l9 6l-9 5z" fill="#b83c3c" stroke="#222" />
    </>
);

const WheelArea = styled.div`
    flex: 1;
    display: grid;
    padding-top: 5px;

    & > * {
        grid-area: 1 / 1;
    }
`;

const Wheel = styled.svg`
    width: 130px;
    height: 130px;
    place-self: start center;
`;

const WheelFooter = styled.div`
    align-self: end;
    display: flex;
    align-items: flex-end;
    height: 48px;
    padding: 0 4px 3px 0;
`;

const SwatchStack = styled.div`
    width: 33px;
    padding-left: 1px;
    display: flex;
    flex-direction: column;
`;

const MainSwatch = styled.button`
    width: 19px;
    height: 19px;
    z-index: 1;
    background: #000;
    border: 2px solid #5ab0f0;
    box-shadow: inset 0 0 0 1px #222, inset 0 0 0 2px #fff;
`;

const SubSwatch = styled.button`
    width: 20px;
    height: 20px;
    margin: -7px 0 2px 11px;
    background: #fff;
    border: 1px solid #666;
`;

const ClearSwatch = styled.button`
    width: 31px;
    height: 9px;
    border: 1px solid #333;
    ${checker(8, '#777', '#fff')}
`;

const Hsv = styled.div`
    flex: 1;
    display: flex;
    justify-content: flex-end;
    gap: 7px;
    padding-right: 8px;
    font-size: 12px;
`;

const HsvField = styled.label`
    display: flex;
    align-items: center;
`;

const HsvLetter = styled.span`
    width: 8px;
    background: #161616;
    font-size: 8px;
    font-weight: 700;
    line-height: 8px;
    text-align: center;
`;

function ColorWheel() {
    return (
        <DockPanel height={180} tab="Color Wheel" icon="wheel" width={86} fade minis={['bars', 'swatches']}>
            <WheelArea>
                <Wheel viewBox="0 0 130 130">
                    <defs>
                        <linearGradient id="sat"><stop stopColor="#e4e0e0" /><stop offset=".8" stopColor="#f01818" /></linearGradient>
                        <linearGradient id="val" x2="0" y2="1"><stop stopColor="#000" stopOpacity="0" /><stop offset="1" stopColor="#000" /></linearGradient>
                        <linearGradient id="gradTool" x2="1" y2="1"><stop stopColor="#111" /><stop offset="1" stopColor="#ddd" /></linearGradient>
                    </defs>
                    <circle cx="65" cy="65" r="57" fill="none" stroke="#444" strokeWidth="16" />
                    <HueRing />
                    <path d="M32 32h66v66H32z" fill="url(#sat)" stroke="#333" />
                    <path d="M32 32h66v66H32z" fill="url(#val)" />
                    <path d="M8 29l13 7l-2 4l-13-7z" fill="none" stroke="#111" strokeWidth="1.200" />
                    <path d="M29 96h5v5h-5z" fill="#777" stroke="#111" strokeWidth="4" />
                    <path d="M29 96h5v5h-5z" fill="#777" stroke="#fff" strokeWidth="1.500" />
                </Wheel>
                <WheelFooter>
                    <SwatchStack>
                        <MainSwatch aria-label="Main color" />
                        <SubSwatch aria-label="Sub color" />
                        <ClearSwatch aria-label="Transparent" />
                    </SwatchStack>
                    <Hsv>
                        {['H', 'S', 'V'].map((l) => (
                            <HsvField key={l}>
                                <HsvLetter>{l}</HsvLetter>
                                <NumberField $width={17} defaultValue="0" />
                            </HsvField>
                        ))}
                    </Hsv>
                    <IconButton aria-label="Switch color space"><Icon name="colorSpace" size={19} /></IconButton>
                </WheelFooter>
            </WheelArea>
        </DockPanel>
    );
}

/* ---------- tools ---------- */

const TOOLS = [
    ['magnify', 'hand', 'cube', 'move', 'marquee', 'wand', 'dropper'],
    ['nib', 'pencil', 'brush', 'airbrush', 'sparkle', 'eraser', 'drops'],
    ['bucket', 'gradient', 'curve', 'line', 'text', 'rulerPen'],
];

const ToolRow = styled.div`
    height: 27px;
    flex: none;
    display: grid;
    grid-template-columns: repeat(7, 1fr);
    margin: 0 -4px 2px 1px;
    border: 1px solid #363a3b;
    border-bottom-color: #4a4e4f;
    background: #6d7172;
`;

const ToolButton = styled.button`
    display: flex;
    align-items: center;
    justify-content: center;
    ${(p) => p.$active && 'background: #5d7587;'}
`;

const TextGlyph = styled.span`
    color: #35393a;
    font: 700 22px/22px "Liberation Serif", serif;
`;

function Tools() {
    return (
        <DockPanel height={137} tab="Tool" icon="penUp" width={49} fade minis={[]}>
            <ToolRow><ToolButton $active aria-label="Pen"><Icon name="nib" size={19} /></ToolButton></ToolRow>
            {TOOLS.map((row) => (
                <ToolRow key={row[0]}>
                    {row.map((n) => (
                        <ToolButton key={n} aria-label={n}>
                            {n === 'text' ? <TextGlyph>A</TextGlyph> : <Icon name={n} size={19} />}
                        </ToolButton>
                    ))}
                </ToolRow>
            ))}
        </DockPanel>
    );
}

const GroupBar = styled.div`
    height: 27px;
    flex: none;
    display: flex;
    border: 1px solid #36393a;
    border-width: 1px 0;
    margin-left: 1px;
`;

const GroupTab = styled.button`
    width: 149px;
    display: flex;
    align-items: center;
    gap: 3px;
    padding-left: 4px;
    background: linear-gradient(#7490a2, #5b7588);
    border-right: 1px solid #333;
`;

const BrushList = styled.div`
    flex: 1;
    min-height: 0;
    margin: 1px 0 0 1px;
    border-top: 1px solid #36393a;
    border-right: 12px solid #5e6263;
`;

const BrushItem = styled.button`
    width: 100%;
    height: 36px;
    display: flex;
    justify-content: space-between;
    align-items: flex-start;
    background: linear-gradient(#7490a2, #5b7588);
    border: 1px solid #303638;
    border-width: 0 1px 1px 0;
`;

const BrushName = styled.span`
    align-self: flex-end;
    padding: 0 2px 0 5px;
    background: #62727d;
`;

function SubTools() {
    return (
        <DockPanel tab="Sub Tool [COPY]" icon="subTools" width={110} top={4} minis={['penGear', 'penList']}>
            <GroupBar><GroupTab><Icon name="nib" size={18} />COPY</GroupTab></GroupBar>
            <BrushList>
                <BrushItem>
                    <svg width="126" height="26" viewBox="0 0 126 26">
                        <path d="M16 15Q40 1 64 9Q84 17 109 8Q84 21 60 12Q38 4 16 15z" fill="#0b0b0b" />
                    </svg>
                    <BrushName>COPY</BrushName>
                </BrushItem>
            </BrushList>
            <PanelFooter $end>
                <IconButton aria-label="Duplicate sub tool"><Icon name="newSheet" size={20} /></IconButton>
                <IconButton aria-label="Delete sub tool"><Icon name="trash" size={20} /></IconButton>
            </PanelFooter>
        </DockPanel>
    );
}

/* ---------- document window ---------- */

const Main = styled.main`
    flex: 1;
    min-width: 0;
    margin-left: 6px;
    display: flex;
    flex-direction: column;
    background: #404040;
`;

const CommandBar = styled.div`
    height: 26px;
    flex: none;
    display: flex;
    align-items: center;
    padding-left: 1px;
    background: linear-gradient(#5e6263, #6e7273 4px, #6b6f70);
    border-bottom: 1px solid #2a2a2a;
`;

const BrandButton = styled.button`
    width: 41px;
    height: 20px;
    margin-right: 6px;
    display: flex;
    justify-content: center;
    align-items: center;
    border-radius: 2px;
    background: linear-gradient(#fff, #b9b9b9);
`;

const CommandGroup = styled.div`
    display: flex;
    align-items: center;
    padding-left: 3px;
    margin-right: 4px;
    border-left: 1px solid #858889;
`;

const COMMANDS = [
    ['newDoc', 'open', 'save', 'selectArrow', 'selectArrow', 'selectArrow'],
    ['undo', 'redo'],
    ['spinner', 'glow', 'bucket', 'transform'],
    ['noSelect', 'invert', 'border'],
    ['snapRuler', 'snapSpecial', 'snapGrid'],
    ['question', 'question'],
];

const TitleBar = styled.header`
    height: 24px;
    flex: none;
    display: flex;
    align-items: center;
    gap: 2px;
    padding: 1px 0 0 5px;
    background: linear-gradient(#4a4a4a, #404040);
    color: #c4c4c4;
    font-family: Roboto, sans-serif;
    font-size: 13px;
    white-space: pre;
`;

const WindowButton = styled.button`
    width: 16px;
    height: 16px;
    display: flex;
    align-items: center;
    justify-content: center;
    border-radius: 8px;
    background: #181818;
`;

const TitleText = styled.h1`
    margin: 0 0 0 17px;
    font: inherit;
`;

const DocumentTabs = styled.div`
    height: 20px;
    flex: none;
    display: flex;
    justify-content: space-between;
    margin: 0 5px 0 4px;
    border-bottom: 1px solid #707070;
    background: #424243;
`;

const DocumentTab = styled.button`
    width: 98px;
    display: flex;
    align-items: center;
    gap: 6px;
    padding-left: 7px;
    background: linear-gradient(#858889, #696d6e);
    font-family: Roboto, sans-serif;
    font-size: 12px;

    &::before {
        content: '';
        width: 6px;
        height: 6px;
        border-radius: 3px;
        background: #464949;
    }
`;

const ScrollButton = styled.button`
    width: 12px;
    height: ${(p) => p.$height || 12}px;
    flex: none;
    display: flex;
    align-items: center;
    justify-content: center;
    background: #6b6f70;
    border: 1px solid #7b7f80;
`;

const CanvasArea = styled.div`
    flex: 1;
    min-height: 0;
    display: flex;
    margin: 0 5px 0 4px;
`;

const Stage = styled.div`
    flex: 1;
    min-width: 0;
    display: flex;
    justify-content: center;
    padding: 9px 62px 0 0;
    background: #3a3a3a;
    overflow: hidden;
`;

const VScroll = styled.div`
    width: 12px;
    display: flex;
    flex-direction: column;
    padding-top: 1px;
    background: linear-gradient(to right, #4d5152, #5f6364 4px);
`;

const HScroll = styled.div`
    flex: 1;
    display: flex;
    height: 12px;
    background: linear-gradient(#4d5152, #5f6364 4px, #5f6364 10px, #8a8d8e 10px);
`;

const Track = styled.div`
    flex: ${(p) => p.$grow} 0 0;
`;

const ScrollThumb = styled(Track)`
    display: flex;
    align-items: center;
    justify-content: center;
    background: ${(p) => (p.$side ? 'linear-gradient(#747879, #676b6c)' : '#6b6f70')};
    border: 1px solid #7c8081;
`;

const Grip = styled.div`
    width: 8px;
    height: 7px;
    background: repeating-linear-gradient(${(p) => (p.$side ? 'to right' : 'to bottom')}, #3f4344 0 1px, transparent 1px 3px);
`;

const StatusBar = styled.div`
    height: 14px;
    flex: none;
    display: flex;
    align-items: center;
    margin: 0 5px 0 6px;
`;

const MiniIcon = styled.button`
    width: 20px;
    height: 12px;
    flex: none;
    display: flex;
    align-items: center;
    justify-content: center;
    background: #676b6c;
`;

const Splitter = styled.div`
    height: 10px;
    flex: none;
    background: linear-gradient(#383838 3px, #232323 5px, #5b5b5b 6px, #454545);
`;

const TimelineBar = styled.div`
    height: 24px;
    flex: none;
    display: flex;
    border-top: 1px solid #858888;
    background: linear-gradient(#4e4e4e, #373737 17px, #6d7172 17px, #6d7172 22px, #444 22px);
`;

const DrawerButton = styled.button`
    width: 21px;
    margin-left: auto;
    display: flex;
    align-items: center;
    justify-content: center;
    padding-top: 8px;
    background: #454545;
    border-left: 1px solid #2e2e2e;
`;

function Paper() {
    return (
        <svg width="392" height="554" viewBox="0 0 392 554">
            <path d="M0 0h392v554H0z" fill="#fff" />
            <g fill="none" shapeRendering="crispEdges">
                <path d="M26.500 37.500h340v480h-340z" stroke="#dfddf4" />
                <path d="M56.500 73.500h279v408h-279z" stroke="#d3d2f7" />
                <path d="M16.500 28.500h359v498h-359z" stroke="#b4b3f8" />
                <g stroke="#8f8eec">
                    <path d="M26.500 9v19M196.500 9v19M26.500 527v19M196.500 527v19M7 37.500h10M7 517.500h10M376 37.500h9M376 517.500h9" />
                    <path d="M0 277.500h17M7.500 259v38M375 277.500h17M384.500 259v38" />
                </g>
                <path d="M366 9v19M366 527v19M177 19h38M177 536h38" stroke="#b9b8e4" strokeWidth="2" />
            </g>
        </svg>
    );
}

function DocumentWindow() {
    return (
        <Main>
            <CommandBar>
                <BrandButton aria-label="Clip Studio">
                    <svg width="24" height="18" viewBox="0 0 24 22">
                        <g transform="rotate(-10 12 11)">
                            <path d="M8 4Q1 8 2 13q2 5 9 5t11-7q0-7-8-6q-8 1-8 6q0 4 6 3q5-1 5-4q-1-2-5 0" fill="none" stroke="#333" strokeWidth="2.500" />
                        </g>
                    </svg>
                </BrandButton>
                {COMMANDS.map((group) => (
                    <CommandGroup key={group[0]}>
                        {group.map((n, i) => (
                            <IconButton key={n + i} $w={24} aria-label={n}><Icon name={n} size={20} /></IconButton>
                        ))}
                    </CommandGroup>
                ))}
            </CommandBar>
            <TitleBar>
                {['close', 'minimize', 'maximize'].map((n) => (
                    <WindowButton key={n} aria-label={n}><Icon name={n} size={14} /></WindowButton>
                ))}
                <TitleText>New canvas* (A4 210.00 x 297.00mm Binding size:B5 Size 182.00 x 257.00mm 600dpi 15.8%)  - CLIP STUDIO PAINT EX</TitleText>
            </TitleBar>
            <DocumentTabs>
                <DocumentTab>New canvas*</DocumentTab>
                <ScrollButton $height={19} aria-label="Tab list"><Icon name="down" size={9} /></ScrollButton>
            </DocumentTabs>
            <CanvasArea>
                <Stage><Paper /></Stage>
                <VScroll>
                    <ScrollButton aria-label="Scroll up"><Icon name="up" size={9} /></ScrollButton>
                    <Track $grow={165} />
                    <ScrollThumb $grow={223}><Grip /></ScrollThumb>
                    <Track $grow={164} />
                    <ScrollButton aria-label="Scroll down"><Icon name="down" size={9} /></ScrollButton>
                </VScroll>
            </CanvasArea>
            <StatusBar>
                <ValueSlider width={100} shape="ramp" value="15.8" label="Canvas zoom" percent={34} align="right" />
                {['zoomOut', 'zoomIn', 'fit'].map((n) => <MiniIcon key={n} aria-label={n}><Icon name={n} size={12} /></MiniIcon>)}
                <ValueSlider width={99} shape="bump" value="0.0" label="Canvas rotation" percent={50} align="left" />
                {['rotateLeft', 'rotateRight', 'burst'].map((n) => <MiniIcon key={n} aria-label={n}><Icon name={n} size={12} /></MiniIcon>)}
                <HScroll>
                    <ScrollButton aria-label="Scroll left"><Icon name="left" size={9} /></ScrollButton>
                    <Track $grow={129} />
                    <ScrollThumb $side $grow={247}><Grip $side /></ScrollThumb>
                    <Track $grow={111} />
                    <ScrollButton aria-label="Scroll right"><Icon name="right" size={9} /></ScrollButton>
                    <ScrollButton as="span" />
                </HScroll>
            </StatusBar>
            <Splitter />
            <TimelineBar>
                <PanelMenu aria-label="Timeline menu"><Icon name="menu" size={12} /></PanelMenu>
                <Tab $width={70}><Icon name="filmStrip" size={17} /><TabText>Timeline</TabText></Tab>
                <DrawerButton aria-label="Open timeline"><Icon name="drawerUp" size={14} /></DrawerButton>
            </TimelineBar>
        </Main>
    );
}

/* ---------- material palette ---------- */

const MATERIALS = [
    'folderBlue', 'folderScene', 'folderGray', 'folderTone', 'folderComic',
    'folderBurst', 'folderImage', 'folderPose', 'folderCube', 'folderBody',
];

const MaterialDock = styled.aside`
    position: relative;
    width: 45px;
    flex: none;
    display: flex;
    flex-direction: column;
    align-items: flex-end;
    gap: 4px;
    padding-right: 3px;
    background: linear-gradient(to right, #2b2b2b, #555 3px, #343434 5px, #484848 8px, #555);
`;

const MaterialHeader = styled(DockHeader)`
    width: 39px;
    margin: 0 -3px -2px 0;
    justify-content: space-between;
    padding: 0 3px 0 1px;
`;

const MaterialButton = styled.button`
    width: 34px;
    height: 40px;
    flex: none;
    display: flex;
    align-items: center;
    justify-content: center;
    padding-top: 2px;
    background: linear-gradient(#717576, #646869);
    border: 1px solid #2e3132;
`;

const ResizeCursor = styled.svg`
    position: absolute;
    left: -11px;
    top: 512px;
`;

function Materials() {
    return (
        <MaterialDock>
            <MaterialHeader><Icon name="chevronsRight" size={12} /><Icon name="chevronLeft" size={12} /></MaterialHeader>
            {MATERIALS.map((n) => (
                <MaterialButton key={n} aria-label={n}>
                    <svg width="24" height="24" viewBox="0 0 26 26">{ICONS[n]}</svg>
                </MaterialButton>
            ))}
            <ResizeCursor width="16" height="12" viewBox="0 0 16 12">
                <path d="M0 6l5-5v3h6V1l5 5l-5 5V8H5v3z" fill="#000" stroke="#fff" strokeWidth="1" />
            </ResizeCursor>
        </MaterialDock>
    );
}

const MENUS = ['File', 'Edit', 'Story', 'Animation', 'Layer', 'Selection', 'View', 'Filter', 'Window', 'Help'];

function App() {
    return (
        <Page>
            <GlobalStyle />
            <MenuBar>
                <FaApple size={16} />
                <AppName>CLIP STUDIO PAINT</AppName>
                {MENUS.map((m) => <MenuItem key={m}>{m}</MenuItem>)}
                <MenuExtras $gap={16}>
                    <MenuExtras $gap={10}>
                        <svg width="21" height="14" viewBox="0 0 21 14" fill="none" stroke="#222" strokeWidth="1.300">
                            <path d="M1 1h13v12H1zM14 6l6-4v10l-6-4" />
                            <circle cx="7.500" cy="7" r="2.500" fill="#111" />
                        </svg>
                        <svg width="18" height="6" viewBox="0 0 18 6" fill="#111">
                            <circle cx="3" cy="3" r="2.200" /><circle cx="9" cy="3" r="2.200" /><circle cx="15" cy="3" r="2.200" />
                        </svg>
                    </MenuExtras>
                    <svg width="16" height="16" viewBox="0 0 16 16" fill="none" stroke="#222" strokeWidth="1.600">
                        <circle cx="6.500" cy="6.500" r="5" /><path d="M10 10l5 5" strokeWidth="2" />
                    </svg>
                    <svg width="18" height="12" viewBox="0 0 18 12" stroke="#909090" strokeWidth="1.400">
                        <path d="M0 1h2M4 1h14M0 6h2M4 6h11M0 11h2M4 11h14" />
                    </svg>
                </MenuExtras>
            </MenuBar>
            <Workspace>
                <Dock>
                    <DockHeader><Icon name="chevronsLeft" size={14} /></DockHeader>
                    <Navigator />
                    <LayerProperty />
                    <Layers />
                    <DockBase />
                </Dock>
                <Dock>
                    <DockHeader><Icon name="chevronsLeft" size={14} /></DockHeader>
                    <ColorWheel />
                    <Tools />
                    <SubTools />
                    <DockBase />
                </Dock>
                <DocumentWindow />
                <Materials />
            </Workspace>
            <Footer />
        </Page>
    );
}

export default App;
